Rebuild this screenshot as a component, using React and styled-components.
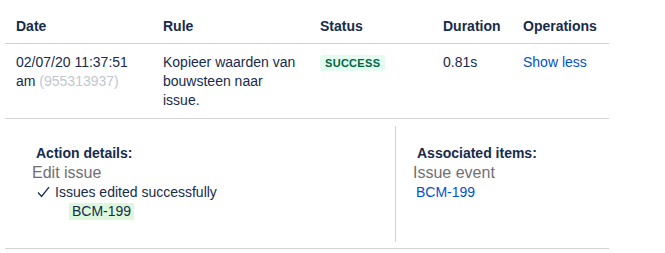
import React from "react";
import styled, { createGlobalStyle } from "styled-components";

const Global = createGlobalStyle`
  body {
    margin: 0;
    background: #fff;
    font-family: "Liberation Sans", Arial, sans-serif;
    color: #172b4d;
  }
`;

const Table = styled.div`
  width: 604px;
  margin-left: 5px;
`;

const Row = styled.div`
  display: grid;
  grid-template-columns: 147px 157px 123px 80px 97px;
  border-bottom: 1px solid #d3d3d3;
  padding: ${(p) => (p.head ? "16px 0 7px" : "9px 0 8px")};
  font-size: 14px;
  line-height: ${(p) => (p.head ? "20px" : "19px")};
  font-weight: ${(p) => (p.head ? 700 : 400)};
`;

const Cell = styled.div`
  padding: 0 8px 0 11px;
`;

const Line = styled.div`
  white-space: nowrap;
`;

const Muted = styled.span`
  color: #c1c7d0;
`;

const Badge = styled.span`
  display: inline-block;
  margin-top: 2px;
  padding: 0 5px;
  height: 16px;
  line-height: 16px;
  border-radius: 3px;
  background: #e3fcef;
  color: #006644;
  font-size: 11px;
  font-weight: 700;
  letter-spacing: 0.3px;
  vertical-align: top;
`;

const Link = styled.a`
  color: #0052cc;
  text-decoration: none;
  cursor: pointer;
`;

const Details = styled.div`
  display: grid;
  grid-template-columns: 391px 1fr;
  padding: 7px 0 6px;
  border-bottom: 1px solid #d3d3d3;
`;

const Panel = styled.div`
  min-height: 116px;
  padding: 18px 0 0 ${(p) => p.pad}px;
  border-right: ${(p) => (p.divider ? "1px solid #d3d3d3" : "none")};
  box-sizing: border-box;
`;

const Heading = styled.div`
  font-size: 14px;
  line-height: 19px;
  font-weight: 700;
  margin-left: 4px;
`;

const Sub = styled.div`
  font-size: 16px;
  line-height: 19px;
  color: #707070;
`;

const CheckLine = styled.div`
  display: flex;
  align-items: center;
  gap: 5px;
  margin-left: 5px;
  font-size: 14px;
  line-height: 20px;
`;

const Chip = styled.span`
  display: inline-block;
  margin: 1px 0 0 37px;
  padding: 0 3px;
  height: 17px;
  line-height: 17px;
  background: #dcf7dc;
  font-size: 14px;
`;

const ItemLink = styled(Link)`
  display: block;
  margin-left: 3px;
  font-size: 14px;
  line-height: 20px;
`;

const CheckIcon = () => (
  <svg width="13" height="12" viewBox="0 0 13 12">
    <polyline
      points="1,6.5 4.6,10.5 12,1.2"
      fill="none"
      stroke="#172b4d"
      strokeWidth="1.3"
    />
  </svg>
);

export default function App() {
  return (
    <>
      <Global />
      <Table>
        <Row head>
          <Cell>Date</Cell>
          <Cell>Rule</Cell>
          <Cell>Status</Cell>
          <Cell>Duration</Cell>
          <Cell>Operations</Cell>
        </Row>
        <Row>
          <Cell>
            <Line>02/07/20 11:37:51</Line>
            <Line>
              am <Muted>(955313937)</Muted>
            </Line>
          </Cell>
          <Cell>Kopieer waarden van bouwsteen naar issue.</Cell>
          <Cell>
            <Badge>SUCCESS</Badge>
          </Cell>
          <Cell>0.81s</Cell>
          <Cell>
            <Link>Show less</Link>
          </Cell>
        </Row>
        <Details>
          <Panel divider pad={27}>
            <Heading>Action details:</Heading>
            <Sub>Edit issue</Sub>
            <CheckLine>
              <CheckIcon />
              Issues edited successfully
            </CheckLine>
            <Chip>BCM-199</Chip>
          </Panel>
          <Panel pad={17}>
            <Heading>Associated items:</Heading>
            <Sub>Issue event</Sub>
            <ItemLink>BCM-199</ItemLink>
          </Panel>
        </Details>
      </Table>
    </>
  );
}
